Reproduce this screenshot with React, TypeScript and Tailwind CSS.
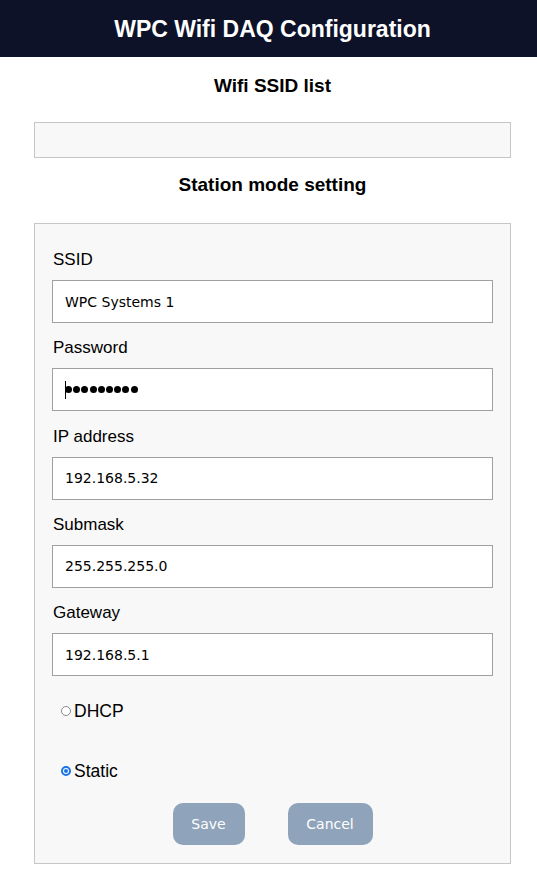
import React from "react";

const fields = [
  { label: "SSID", value: "WPC Systems 1" },
  { label: "Password", value: "", password: true },
  { label: "IP address", value: "192.168.5.32" },
  { label: "Submask", value: "255.255.255.0" },
  { label: "Gateway", value: "192.168.5.1" },
];

export default function App() {
  return (
    <div className="min-h-[869px] bg-white text-black font-['Liberation_Sans',Arial,sans-serif]">
      <header className="h-[57px] bg-[#0d1229] flex items-center justify-center pl-[8px] pt-[2px]">
        <h1 className="text-[23px] font-bold text-white leading-none">WPC Wifi DAQ Configuration</h1>
      </header>

      <main className="pl-[8px]">
        <h3 className="mt-[18px] h-[22px] leading-[22px] text-center text-[19px] font-bold">Wifi SSID list</h3>
        <div className="mx-[26px] mt-[25px] h-[36px] border border-[#c6c6c6] bg-[#f8f8f8]"></div>

        <h3 className="mt-[16px] h-[22px] leading-[22px] text-center text-[19px] font-bold">Station mode setting</h3>

        <div className="mx-[26px] mt-[27px] border border-[#c6c6c6] bg-[#f8f8f8] px-[17px] pt-[26px] pb-[18px]">
          {fields.map((f) => (
            <div key={f.label} className="mb-[15.3px] last:mb-0">
              <label className="block h-[20px] leading-[20px] text-[17px] mb-[10px] pl-[1px]">{f.label}</label>
              {f.password ? (
                <div className="h-[43px] border border-[#a0a0a0] bg-white flex items-center pl-[12px]">
                  <span className="w-[1px] h-[18px] bg-black"></span>
                  <span className="flex items-center gap-[1.2px] -ml-[1px]">
                    {Array.from({ length: 9 }).map((_, i) => (
                      <span key={i} className="w-[7px] h-[7px] rounded-full bg-black"></span>
                    ))}
                  </span>
                </div>
              ) : (
                <input
                  readOnly
                  defaultValue={f.value}
                  className="block w-full h-[43px] border border-[#a0a0a0] bg-white pl-[12px] text-[14px] text-black font-['DejaVu_Sans',Tahoma,sans-serif] outline-none"
                />
              )}
            </div>
          ))}

          <div className="mt-[25px] flex flex-col gap-[40px] pl-[9px]">
            <label className="h-[20px] flex items-center gap-[3px] text-[17.5px]">
              <span className="w-[10px] h-[10px] rounded-full border border-[#8a8a8a] bg-white"></span>
              <span>DHCP</span>
            </label>
            <label className="h-[20px] flex items-center gap-[3px] text-[17.5px]">
              <span className="w-[10px] h-[10px] rounded-full border-[2px] border-[#1a73e8] bg-white flex items-center justify-center">
                <span className="w-[4px] h-[4px] rounded-full bg-[#1a73e8]"></span>
              </span>
              <span>Static</span>
            </label>
          </div>

          <div className="mt-[22px] flex justify-center gap-[43px]">
            <button className="w-[72px] h-[42px] rounded-[10px] bg-[#8fa3ba] text-white text-[14px] font-['DejaVu_Sans',Tahoma,sans-serif]">
              Save
            </button>
            <button className="w-[85px] h-[42px] rounded-[10px] bg-[#8fa3ba] text-white text-[14px] font-['DejaVu_Sans',Tahoma,sans-serif]">
              Cancel
            </button>
          </div>
        </div>
      </main>
    </div>
  );
}
